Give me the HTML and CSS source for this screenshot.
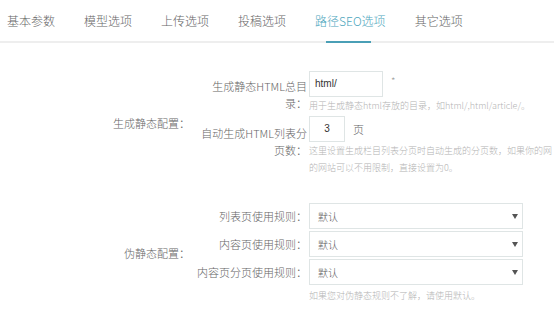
FILE: index.html
```html
<!DOCTYPE html>
<html lang="zh-CN">
<head>
<meta charset="utf-8">
<title>路径SEO选项</title>
<link rel="stylesheet" href="styles.css">
</head>
<body>
<nav class="tabs">
  <a class="tab">基本参数</a>
  <a class="tab">模型选项</a>
  <a class="tab">上传选项</a>
  <a class="tab">投稿选项</a>
  <a class="tab active">路径SEO选项</a>
  <a class="tab">其它选项</a>
</nav>
<div class="form">
  <div class="group">
    <div class="group-label">生成静态配置：</div>
    <div class="rows">
      <div class="row">
        <div class="row-label">生成静态HTML总目录：</div>
        <div class="field">
          <div class="line">
            <div class="input input-dir">html/</div>
            <span class="req">*</span>
          </div>
          <div class="hint">用于生成静态html存放的目录，如html/,html/article/。</div>
        </div>
      </div>
      <div class="row row-pages">
        <div class="row-label">自动生成HTML列表分页数：</div>
        <div class="field">
          <div class="line">
            <div class="input input-num">3</div>
            <span class="unit">页</span>
          </div>
          <div class="hint">这里设置生成栏目列表分页时自动生成的分页数，如果你的网</div>
          <div class="hint">的网站可以不用限制，直接设置为0。</div>
        </div>
      </div>
    </div>
  </div>
  <div class="group group-rewrite">
    <div class="group-label">伪静态配置：</div>
    <div class="rows">
      <div class="row row-select">
        <div class="row-label">列表页使用规则：</div>
        <div class="field">
          <div class="select"><span>默认</span><svg class="caret" width="6" height="5" viewBox="0 0 6 5"><path d="M0 0H6L3 5Z" fill="#555"/></svg></div>
        </div>
      </div>
      <div class="row row-select">
        <div class="row-label">内容页使用规则：</div>
        <div class="field">
          <div class="select"><span>默认</span><svg class="caret" width="6" height="5" viewBox="0 0 6 5"><path d="M0 0H6L3 5Z" fill="#555"/></svg></div>
        </div>
      </div>
      <div class="row row-select">
        <div class="row-label">内容页分页使用规则：</div>
        <div class="field">
          <div class="select"><span>默认</span><svg class="caret" width="6" height="5" viewBox="0 0 6 5"><path d="M0 0H6L3 5Z" fill="#555"/></svg></div>
          <div class="hint hint-select">如果您对伪静态规则不了解，请使用默认。</div>
        </div>
      </div>
    </div>
  </div>
</div>
</body>
</html>
```
FILE: styles.css
```css
html, body {
  margin: 0;
  padding: 0;
  background: #fff;
  overflow: hidden;
}
body {
  width: 554px;
  height: 318px;
  font-family: "Noto Sans CJK SC", "Liberation Sans", sans-serif;
  font-weight: 300;
  color: #666;
}
.tabs {
  display: flex;
  gap: 29px;
  padding-left: 7px;
  height: 41px;
  border-bottom: 2px solid #eeeeee;
}
.tab {
  position: relative;
  font-size: 12px;
  line-height: 41px;
  color: #666;
  white-space: nowrap;
}
.tab.active {
  color: #4ea6bd;
}
.tab.active::after {
  content: "";
  position: absolute;
  left: 50%;
  bottom: -2px;
  width: 45px;
  height: 2px;
  margin-left: -24px;
  background: #4a9fb6;
}
.form {
  padding-top: 28px;
}
.group {
  display: flex;
  align-items: center;
}
.group-rewrite {
  margin-top: 27px;
}
.group-label {
  width: 190px;
  text-align: right;
  font-size: 11px;
  line-height: 17px;
  flex: none;
}
.rows {
  display: flex;
  flex-direction: column;
  gap: 2px;
  margin-left: 6px;
}
.row {
  display: flex;
  align-items: flex-start;
}
.row-label {
  width: 111px;
  flex: none;
  text-align: right;
  font-size: 11px;
  line-height: 17px;
  padding-top: 7px;
}
.row-pages .row-label {
  padding-top: 9px;
}
.row-select .row-label {
  padding-top: 0;
  line-height: 26px;
}
.field {
  margin-left: 2px;
}
.line {
  display: flex;
  align-items: center;
}
.input {
  box-sizing: border-box;
  height: 26px;
  border: 1px solid #dfe5e5;
  font-family: "Liberation Sans", "Noto Sans CJK SC", sans-serif;
  font-weight: 400;
  font-size: 10px;
  line-height: 24px;
  color: #333;
}
.input-dir {
  width: 74px;
  padding-left: 5px;
}
.input-num {
  width: 36px;
  text-align: center;
}
.req {
  align-self: flex-start;
  margin-left: 8px;
  margin-top: 2px;
  font-size: 10px;
  color: #999;
}
.unit {
  margin-left: 8px;
  font-size: 11px;
  color: #666;
}
.hint {
  font-size: 9px;
  line-height: 17px;
  color: #b3b3b3;
  white-space: nowrap;
}
.hint-select {
  margin-top: 2px;
}
.select {
  box-sizing: border-box;
  width: 214px;
  height: 26px;
  border: 1px solid #dfe5e5;
  display: flex;
  align-items: center;
  justify-content: space-between;
  padding: 0 4px 0 8px;
  font-size: 10px;
  color: #555;
}
.caret {
  display: block;
}
```
